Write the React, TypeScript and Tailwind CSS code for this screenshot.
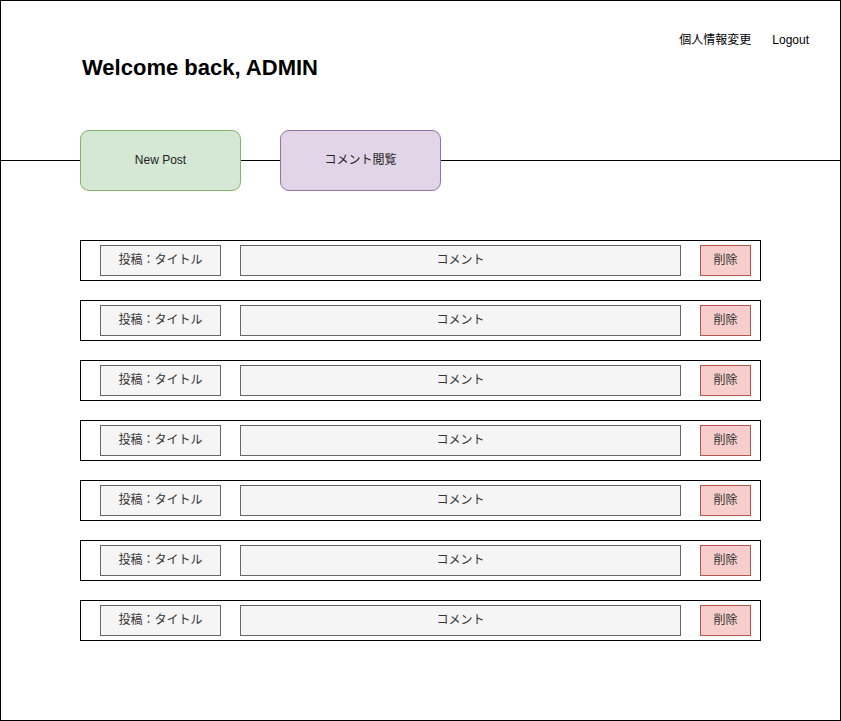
const rows = Array.from({ length: 7 }, (_, i) => i);

export default function App() {
  return (
    <div className="relative h-[721px] w-[841px] border border-black bg-white font-['Liberation_Sans','Noto_Sans_CJK_JP',sans-serif] text-black">
      {/* top links */}
      <div className="flex justify-end gap-[21px] pr-[31px] pt-[31px] text-[12px] leading-[16px]">
        <a className="cursor-pointer">個人情報変更</a>
        <a className="cursor-pointer">Logout</a>
      </div>

      <h1 className="ml-[81px] mt-[8px] text-[22px] font-bold leading-[24px]">Welcome back, ADMIN</h1>

      {/* nav buttons on a line */}
      <div className="mt-[50px] flex h-[61px] items-center">
        <div className="h-px w-[79px] bg-black" />
        <button
          type="button"
          className="flex h-[61px] w-[161px] items-center justify-center rounded-[9px] border border-[#82b366] bg-[#d5e8d4] pb-[2px] text-[12px] text-[#222]"
        >
          New Post
        </button>
        <div className="h-px w-[39px] bg-black" />
        <button
          type="button"
          className="flex h-[61px] w-[161px] items-center justify-center rounded-[9px] border border-[#9673a6] bg-[#e1d5e7] pb-[2px] text-[12px] text-[#222]"
        >
          コメント閲覧
        </button>
        <div className="h-px flex-1 bg-black" />
      </div>

      {/* comment list */}
      <div className="ml-[79px] mt-[49px] flex flex-col gap-[19px]">
        {rows.map((i) => (
          <div key={i} className="flex h-[41px] w-[681px] items-center border border-black pl-[19px] text-[12px] text-[#333]">
            <div className="flex h-[31px] w-[121px] items-center justify-center border border-[#666] bg-[#f5f5f5] pb-[2px]">
              投稿：タイトル
            </div>
            <div className="ml-[19px] flex h-[31px] w-[441px] items-center justify-center border border-[#666] bg-[#f5f5f5] pb-[2px]">
              コメント
            </div>
            <button
              type="button"
              className="ml-[19px] flex h-[31px] w-[51px] items-center justify-center border border-[#b85450] bg-[#f8cecc] pb-[2px]"
            >
              削除
            </button>
          </div>
        ))}
      </div>
    </div>
  );
}
